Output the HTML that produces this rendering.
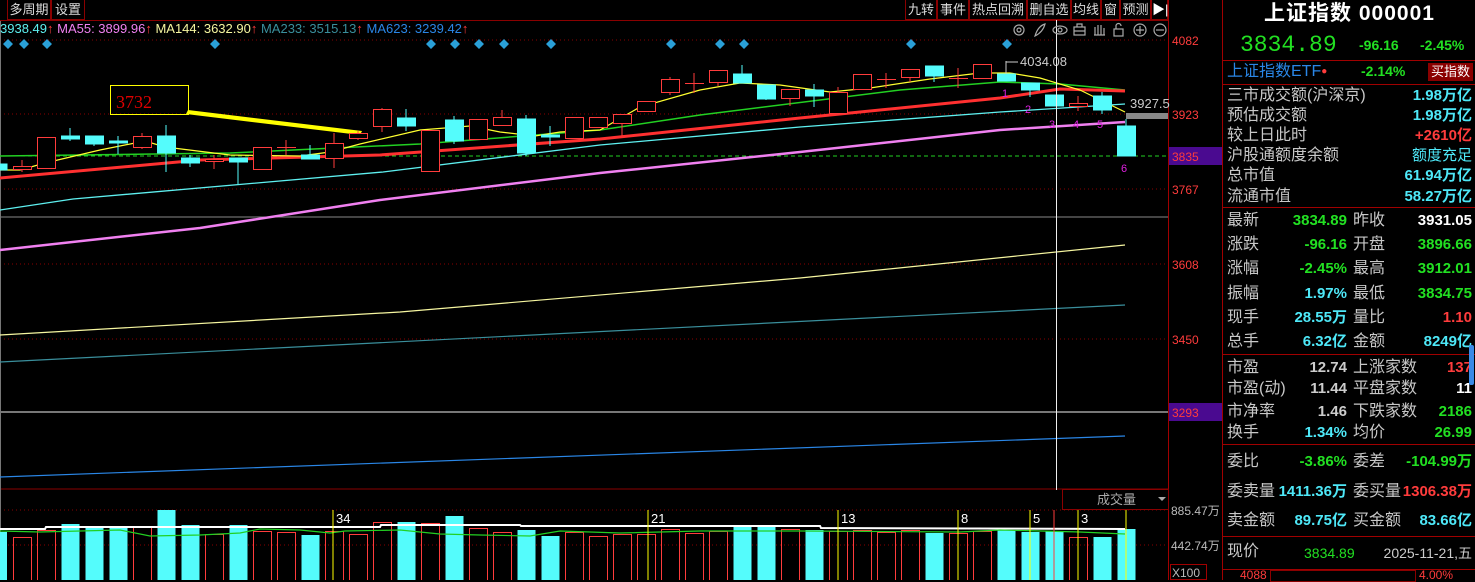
<!DOCTYPE html>
<html><head><meta charset="utf-8"><style>
*{margin:0;padding:0;box-sizing:border-box}
body{width:1475px;height:580px;background:#000;overflow:hidden;position:relative;font-family:"Liberation Sans","Noto Sans CJK SC",sans-serif;color:#c0c0c0}
.a{position:absolute;white-space:nowrap}
.tb{position:absolute;top:0;height:20px;border:1px solid #8a0000;border-top:none;font-size:13px;color:#ddd;line-height:19px;text-align:center}
.rp{position:absolute;left:1222px;top:0;width:253px;height:580px;border-left:1px solid #a00000}
.l{font-size:16px;color:#c8c8c8;line-height:20px}
.v{font-size:15px;font-weight:bold;line-height:20px;text-align:right}
.hl{position:absolute;left:0;width:253px;height:1px;background:#a00000}
.g{color:#22e022}.c{color:#4ee8f8}.r{color:#ff3c3c}.w{color:#fff}
</style></head><body>
<svg class="a" style="left:0;top:0" width="1222" height="580" viewBox="0 0 1222 580">
<g stroke="#8a0000" stroke-dasharray="1,3">
<line x1="0" y1="40" x2="1168" y2="40"/><line x1="0" y1="114" x2="1168" y2="114"/><line x1="0" y1="189" x2="1168" y2="189"/><line x1="0" y1="264" x2="1168" y2="264"/><line x1="0" y1="339" x2="1168" y2="339"/><line x1="0" y1="510" x2="1168" y2="510"/><line x1="0" y1="545" x2="1168" y2="545"/>
</g>
<line x1="0" y1="217" x2="1168" y2="217" stroke="#888"/>
<line x1="0" y1="412" x2="1168" y2="412" stroke="#eee"/>
<line x1="0" y1="489" x2="1168" y2="489" stroke="#8a0000"/>
<line x1="1168.5" y1="0" x2="1168.5" y2="580" stroke="#a00000"/>
<line x1="0.5" y1="20" x2="0.5" y2="580" stroke="#777"/>
<line x1="0" y1="156" x2="1168" y2="156" stroke="#22d022" stroke-dasharray="4,3"/>
<line x1="0" y1="20.5" x2="1168" y2="20.5" stroke="#8a0000"/>
<polyline fill="none" stroke="#f6f6a0" stroke-width="1.2" points="0,335 400,312 800,278 1125,245"/>
<polyline fill="none" stroke="#3a8f9c" stroke-width="1.2" points="0,362 1125,305"/>
<polyline fill="none" stroke="#2a86e6" stroke-width="1.2" points="0,477 1125,436"/>
<polyline fill="none" stroke="#f080f0" stroke-width="2.5" points="0,250 200,228 380,200 600,173 800,152 1000,130 1125,122"/>
<polyline fill="none" stroke="#5ef0f0" stroke-width="1.3" points="0,210 73,199 383,172 600,145 800,127 1000,112 1125,104"/>
<polyline fill="none" stroke="#22d022" stroke-width="1.5" points="0,156 230,153 420,144 600,130 700,115 900,90 1000,82 1060,84 1125,90"/>
<polyline fill="none" stroke="#ff3030" stroke-width="3" points="0,178 200,160 380,155 600,139 800,118 1000,98 1060,89 1125,91"/>
<polyline fill="none" stroke="#ffff30" stroke-width="1.2" points="0,170 20,170 45,163 100,150 145,141 165,147 230,155 300,156 330,152 360,144 420,130 470,126 500,132 535,136 560,132 600,130 640,107 700,90 740,83 780,85 830,92 870,88 930,79 980,73 1010,73 1040,78 1080,90 1125,112"/>
<rect x="110.5" y="85.5" width="78" height="29" fill="none" stroke="#ffff00"/>
<text x="116" y="108" fill="#e00000" font-family="Liberation Serif" font-size="18">3732</text>
<polygon points="188,110 362,131 360,135 186,114" fill="#ffff00"/>
<g stroke="#ff3c3c" fill="#000">
<line x1="22" y1="160" x2="22" y2="172"/><rect x="13.5" y="166.5" width="18" height="3"/>
<line x1="46" y1="137" x2="46" y2="168"/><rect x="37.5" y="137.5" width="18" height="31"/>
<line x1="142" y1="133" x2="142" y2="149"/><rect x="133.5" y="136.5" width="18" height="11"/>
<line x1="214" y1="155" x2="214" y2="169"/><rect x="205.5" y="159.5" width="18" height="2"/>
<line x1="262" y1="147" x2="262" y2="169"/><rect x="253.5" y="147.5" width="18" height="22"/>
<line x1="286" y1="140" x2="286" y2="155"/><line x1="277" y1="147.5" x2="296" y2="147.5"/>
<line x1="334" y1="133" x2="334" y2="168"/><rect x="325.5" y="143.5" width="18" height="15"/>
<line x1="358" y1="131" x2="358" y2="140"/><rect x="349.5" y="133.5" width="18" height="5"/>
<line x1="382" y1="108" x2="382" y2="132"/><rect x="373.5" y="109.5" width="18" height="17"/>
<rect x="421.5" y="130.5" width="18" height="41"/>
<rect x="469.5" y="119.5" width="18" height="20"/>
<line x1="502" y1="110" x2="502" y2="125"/><rect x="493.5" y="117.5" width="18" height="8"/>
<rect x="565.5" y="117.5" width="18" height="21"/>
<rect x="589.5" y="117.5" width="18" height="10"/>
<line x1="622" y1="114" x2="622" y2="136"/><rect x="613.5" y="114.5" width="18" height="9"/>
<rect x="637.5" y="101.5" width="18" height="10"/>
<line x1="670" y1="77" x2="670" y2="95"/><rect x="661.5" y="79.5" width="18" height="13"/>
<line x1="694" y1="73" x2="694" y2="93"/><line x1="685" y1="83.5" x2="704" y2="83.5"/>
<line x1="718" y1="82" x2="718" y2="86"/><rect x="709.5" y="70.5" width="18" height="12"/>
<line x1="790" y1="98" x2="790" y2="106"/><rect x="781.5" y="89.5" width="18" height="9"/>
<line x1="838" y1="87" x2="838" y2="92"/><rect x="829.5" y="92.5" width="18" height="21"/>
<rect x="853.5" y="74.5" width="18" height="15"/>
<line x1="886" y1="73" x2="886" y2="88"/><line x1="877" y1="79.5" x2="896" y2="79.5"/>
<line x1="910" y1="77" x2="910" y2="82"/><rect x="901.5" y="69.5" width="18" height="8"/>
<line x1="958" y1="68" x2="958" y2="88"/><line x1="949" y1="78.5" x2="968" y2="78.5"/>
<rect x="973.5" y="64.5" width="18" height="14"/>
<line x1="1078" y1="96" x2="1078" y2="111"/><rect x="1069.5" y="103.5" width="18" height="3"/>
</g>
<g stroke="#54fcfc" fill="#54fcfc">
<rect x="-5" y="164" width="12" height="6"/>
<line x1="70" y1="128" x2="70" y2="141"/><rect x="61.5" y="136" width="18" height="3"/>
<line x1="94" y1="136" x2="94" y2="146"/><rect x="85.5" y="136" width="18" height="8"/>
<line x1="118" y1="136" x2="118" y2="154"/><rect x="109.5" y="141" width="18" height="2"/>
<line x1="166" y1="125" x2="166" y2="172"/><rect x="157.5" y="136" width="18" height="17"/>
<line x1="190" y1="155" x2="190" y2="167"/><rect x="181.5" y="158" width="18" height="5"/>
<line x1="238" y1="158" x2="238" y2="184"/><rect x="229.5" y="158" width="18" height="4"/>
<line x1="310" y1="145" x2="310" y2="158"/><rect x="301.5" y="155" width="18" height="4"/>
<line x1="406" y1="109" x2="406" y2="131"/><rect x="397.5" y="118" width="18" height="8"/>
<line x1="454" y1="116" x2="454" y2="144"/><rect x="445.5" y="120" width="18" height="21"/>
<line x1="526" y1="115" x2="526" y2="156"/><rect x="517.5" y="119" width="18" height="34"/>
<line x1="550" y1="126" x2="550" y2="146"/><rect x="541.5" y="135" width="18" height="2"/>
<line x1="742" y1="65" x2="742" y2="83"/><rect x="733.5" y="74" width="18" height="9"/>
<line x1="766" y1="85" x2="766" y2="100"/><rect x="757.5" y="85" width="18" height="14"/>
<line x1="814" y1="84" x2="814" y2="107"/><rect x="805.5" y="90" width="18" height="6"/>
<line x1="934" y1="66" x2="934" y2="82"/><rect x="925.5" y="66" width="18" height="10"/>
<line x1="1006" y1="61" x2="1006" y2="81"/><rect x="997.5" y="74" width="18" height="7"/>
<line x1="1030" y1="83" x2="1030" y2="97"/><rect x="1021.5" y="83" width="18" height="7"/>
<rect x="1045.5" y="95" width="18" height="11"/>
<line x1="1102" y1="92" x2="1102" y2="114"/><rect x="1093.5" y="96" width="18" height="14"/>
<line x1="1126" y1="119" x2="1126" y2="126"/><rect x="1117.5" y="126" width="18" height="30"/>
</g>
<rect x="1126" y="113" width="42" height="6" fill="#888"/>
<line x1="1006" y1="61" x2="1006" y2="74" stroke="#ccc"/><line x1="1006" y1="62" x2="1018" y2="62" stroke="#ccc"/>
<text x="1020" y="66" fill="#ccc" font-size="13">4034.08</text>
<text x="1130" y="108" fill="#ccc" font-size="13">3927.5</text>
<g fill="#e020e0" font-size="11"><text x="1002" y="97">1</text><text x="1025" y="113">2</text><text x="1049" y="128">3</text><text x="1073" y="128">4</text><text x="1097" y="128">5</text><text x="1121" y="172">6</text></g>
<line x1="1056.5" y1="20" x2="1056.5" y2="490" stroke="#eee"/>
<g fill="#2aa0d8">
<path d="M8,39l5,5-5,5-5-5z M24,39l5,5-5,5-5-5z M47,39l5,5-5,5-5-5z M215,39l5,5-5,5-5-5z M431,39l5,5-5,5-5-5z M455,39l5,5-5,5-5-5z M479,39l5,5-5,5-5-5z M504,39l5,5-5,5-5-5z M551,39l5,5-5,5-5-5z M671,39l5,5-5,5-5-5z M720,39l5,5-5,5-5-5z M744,39l5,5-5,5-5-5z M911,39l5,5-5,5-5-5z M1007,39l5,5-5,5-5-5z"/>
</g>
<g fill="none" stroke="#aaa" stroke-width="1.2">
<circle cx="1019" cy="30" r="5"/><circle cx="1019" cy="30" r="2"/>
<path d="M1035,36 Q1038,26 1045,24 Q1043,32 1035,36z"/>
<ellipse cx="1060" cy="30" rx="7" ry="4"/><circle cx="1060" cy="30" r="2"/>
<rect x="1074" y="27" width="11" height="8"/><path d="M1077,27v-3h5v3M1074,31h11"/>
<path d="M1095,35v-8M1098,35v-10M1101,35v-10M1104,35v-7M1094,35h11"/>
<rect x="1114" y="29" width="9" height="7"/><path d="M1116,29v-3a2.5,2.5 0 0 1 5,0"/>
<circle cx="1140" cy="30" r="6"/><path d="M1136,30h8M1140,26v8"/>
<circle cx="1160" cy="30" r="6"/><path d="M1156,30h8"/>
</g>
<g fill="#54fcfc">
<rect x="-5" y="532" width="12" height="48"/><rect x="61.5" y="524" width="18" height="56"/><rect x="85.5" y="527" width="18" height="53"/><rect x="109.5" y="527" width="18" height="53"/><rect x="157.5" y="510" width="18" height="70"/><rect x="181.5" y="525" width="18" height="55"/><rect x="229.5" y="525" width="18" height="55"/><rect x="301.5" y="535" width="18" height="45"/><rect x="397.5" y="522" width="18" height="58"/><rect x="445.5" y="516" width="18" height="64"/><rect x="517.5" y="530" width="18" height="50"/><rect x="541.5" y="536" width="18" height="44"/><rect x="733.5" y="526" width="18" height="54"/><rect x="757.5" y="526" width="18" height="54"/><rect x="805.5" y="530" width="18" height="50"/><rect x="925.5" y="533" width="18" height="47"/><rect x="997.5" y="530" width="18" height="50"/><rect x="1021.5" y="532" width="18" height="48"/><rect x="1045.5" y="531" width="18" height="49"/><rect x="1093.5" y="537" width="18" height="43"/><rect x="1117.5" y="529" width="18" height="51"/>
</g>
<g fill="none" stroke="#ff3c3c">
<rect x="13.5" y="537.5" width="18" height="43"/><rect x="37.5" y="530.5" width="18" height="50"/><rect x="133.5" y="527.5" width="18" height="53"/><rect x="205.5" y="534.5" width="18" height="46"/><rect x="253.5" y="531.5" width="18" height="49"/><rect x="277.5" y="532.5" width="18" height="48"/><rect x="325.5" y="531.5" width="18" height="49"/><rect x="349.5" y="534.5" width="18" height="46"/><rect x="373.5" y="522.5" width="18" height="58"/><rect x="421.5" y="523.5" width="18" height="57"/><rect x="469.5" y="528.5" width="18" height="52"/><rect x="493.5" y="532.5" width="18" height="48"/><rect x="565.5" y="532.5" width="18" height="48"/><rect x="589.5" y="536.5" width="18" height="44"/><rect x="613.5" y="534.5" width="18" height="46"/><rect x="637.5" y="534.5" width="18" height="46"/><rect x="661.5" y="529.5" width="18" height="51"/><rect x="685.5" y="533.5" width="18" height="47"/><rect x="709.5" y="531.5" width="18" height="49"/><rect x="781.5" y="529.5" width="18" height="51"/><rect x="829.5" y="531.5" width="18" height="49"/><rect x="853.5" y="530.5" width="18" height="50"/><rect x="877.5" y="532.5" width="18" height="48"/><rect x="901.5" y="530.5" width="18" height="50"/><rect x="949.5" y="533.5" width="18" height="47"/><rect x="973.5" y="531.5" width="18" height="49"/><rect x="1069.5" y="537.5" width="18" height="43"/>
</g>
<polyline fill="none" stroke="#fff" stroke-width="2" points="0,529 45,529 46,527 380,527 381,525 520,525 521,526 820,526 821,528 1125,529"/>
<polyline fill="none" stroke="#22d022" stroke-width="1.2" points="0,531 40,532 120,530 150,536 200,535 240,533 260,529 300,530 330,533 345,531 400,530 440,534 480,535 530,536 560,531 620,533 700,531 800,531 960,532 1000,530 1080,532 1125,534"/>
<g stroke="#ffff00"><line x1="333" y1="510" x2="333" y2="580"/><line x1="648" y1="510" x2="648" y2="580"/><line x1="838" y1="510" x2="838" y2="580"/><line x1="958" y1="510" x2="958" y2="580"/><line x1="1030" y1="510" x2="1030" y2="580"/><line x1="1078" y1="510" x2="1078" y2="580"/><line x1="1126" y1="510" x2="1126" y2="580"/></g>
<line x1="1054" y1="510" x2="1054" y2="580" stroke="#ff3c3c"/>
<g fill="#fff" font-size="13"><text x="336" y="523">34</text><text x="651" y="523">21</text><text x="841" y="523">13</text><text x="961" y="523">8</text><text x="1033" y="523">5</text><text x="1081" y="523">3</text></g>
<rect x="1062.5" y="489.5" width="106" height="20" fill="#000" stroke="#8a0000"/>
<text x="1097" y="504" fill="#aaa" font-size="13">成交量</text><path d="M1158,497h8l-4,4z" fill="#aaa"/>
<rect x="1169" y="147" width="53" height="18" fill="#4a0a90"/>
<rect x="1169" y="403" width="53" height="18" fill="#4a0a90"/>
<g fill="#ff3c3c" font-size="12"><text x="1172" y="45">4082</text><text x="1172" y="119">3923</text><text x="1172" y="161">3835</text><text x="1172" y="194">3767</text><text x="1172" y="269">3608</text><text x="1172" y="344">3450</text><text x="1172" y="417">3293</text></g>
<g fill="#bbb" font-size="12"><text x="1171" y="515">885.47万</text><text x="1171" y="550">442.74万</text><text x="1172" y="577">X100</text></g>
<rect x="1170.5" y="564.5" width="36" height="15" fill="none" stroke="#a00000"/>
</svg>
<div class="a" style="left:0;top:21px;font-size:13px;line-height:16px"><span style="color:#5ef0f0">3938.49</span><span class="r">↑</span> <span style="color:#f080f0">MA55: 3899.96</span><span class="r">↑</span> <span style="color:#f6f6a0">MA144: 3632.90</span><span class="r">↑</span> <span style="color:#3a8f9c">MA233: 3515.13</span><span class="r">↑</span> <span style="color:#2a86e6">MA623: 3239.42</span><span class="r">↑</span></div>
<div class="tb" style="left:7px;width:44px">多周期</div><div class="tb" style="left:51px;width:34px">设置</div>
<div class="tb" style="left:905px;width:32px">九转</div><div class="tb" style="left:937px;width:32px">事件</div><div class="tb" style="left:969px;width:58px">热点回溯</div><div class="tb" style="left:1027px;width:44px">删自选</div><div class="tb" style="left:1071px;width:30px">均线</div><div class="tb" style="left:1101px;width:19px">窗</div><div class="tb" style="left:1120px;width:31px">预测</div><div class="tb" style="left:1151px;width:17px;color:#fff">▶|</div>
<div class="rp">
<div class="a w" style="left:0;width:253px;top:1px;text-align:center;font-size:21px;font-weight:bold;line-height:26px;letter-spacing:1px">上证指数 000001</div>
<div class="a g" style="left:17px;top:31px;font-size:23px;line-height:28px;font-family:'Liberation Mono',monospace">3834.89</div>
<div class="a g" style="left:136px;top:37px;font-size:14px;font-weight:bold">-96.16</div>
<div class="a g" style="left:197px;top:37px;font-size:14px;font-weight:bold">-2.45%</div>
<div class="hl" style="top:60px"></div>
<div class="a" style="left:4px;top:62px;font-size:16px;color:#2a86e6;line-height:20px">上证指数ETF<span class="r" style="font-size:10px;vertical-align:top">●</span></div>
<div class="a g" style="left:138px;top:63px;font-size:14px;font-weight:bold">-2.14%</div>
<div class="a w" style="left:205px;top:63px;width:45px;height:18px;background:#8a0000;font-size:13px;text-align:center;line-height:18px">买指数</div>
<div class="hl" style="top:84px"></div>
<div class="a l" style="left:4px;top:86px">三市成交额(沪深京)</div><div class="a v c" style="right:3px;top:86px">1.98万亿</div>
<div class="a l" style="left:4px;top:106px">预估成交额</div><div class="a v c" style="right:3px;top:106px">1.98万亿</div>
<div class="a l" style="left:4px;top:126px">较上日此时</div><div class="a v r" style="right:3px;top:126px">+2610亿</div>
<div class="a l" style="left:4px;top:146px">沪股通额度余额</div><div class="a c" style="right:3px;top:146px;font-size:15px;line-height:20px">额度充足</div>
<div class="a l" style="left:4px;top:166px">总市值</div><div class="a v c" style="right:3px;top:166px">61.94万亿</div>
<div class="a l" style="left:4px;top:187px">流通市值</div><div class="a v c" style="right:3px;top:187px">58.27万亿</div>
<div class="hl" style="top:207px"></div>
<div class="a l" style="left:4px;top:211px">最新</div><div class="a v g" style="right:128px;top:211px">3834.89</div><div class="a l" style="left:130px;top:211px">昨收</div><div class="a v w" style="right:3px;top:211px">3931.05</div>
<div class="a l" style="left:4px;top:235px">涨跌</div><div class="a v g" style="right:128px;top:235px">-96.16</div><div class="a l" style="left:130px;top:235px">开盘</div><div class="a v g" style="right:3px;top:235px">3896.66</div>
<div class="a l" style="left:4px;top:259px">涨幅</div><div class="a v g" style="right:128px;top:259px">-2.45%</div><div class="a l" style="left:130px;top:259px">最高</div><div class="a v g" style="right:3px;top:259px">3912.01</div>
<div class="a l" style="left:4px;top:284px">振幅</div><div class="a v c" style="right:128px;top:284px">1.97%</div><div class="a l" style="left:130px;top:284px">最低</div><div class="a v g" style="right:3px;top:284px">3834.75</div>
<div class="a l" style="left:4px;top:308px">现手</div><div class="a v c" style="right:128px;top:308px">28.55万</div><div class="a l" style="left:130px;top:308px">量比</div><div class="a v r" style="right:3px;top:308px">1.10</div>
<div class="a l" style="left:4px;top:332px">总手</div><div class="a v c" style="right:128px;top:332px">6.32亿</div><div class="a l" style="left:130px;top:332px">金额</div><div class="a v c" style="right:3px;top:332px">8249亿</div>
<div class="hl" style="top:354px"></div>
<div class="a l" style="left:4px;top:358px">市盈</div><div class="a v" style="right:128px;top:358px;color:#ccc">12.74</div><div class="a l" style="left:130px;top:358px">上涨家数</div><div class="a v r" style="right:3px;top:358px">137</div>
<div class="a l" style="left:4px;top:379px">市盈(动)</div><div class="a v" style="right:128px;top:379px;color:#ccc">11.44</div><div class="a l" style="left:130px;top:379px">平盘家数</div><div class="a v w" style="right:3px;top:379px">11</div>
<div class="a l" style="left:4px;top:402px">市净率</div><div class="a v" style="right:128px;top:402px;color:#ccc">1.46</div><div class="a l" style="left:130px;top:402px">下跌家数</div><div class="a v g" style="right:3px;top:402px">2186</div>
<div class="a l" style="left:4px;top:423px">换手</div><div class="a v c" style="right:128px;top:423px">1.34%</div><div class="a l" style="left:130px;top:423px">均价</div><div class="a v g" style="right:3px;top:423px">26.99</div>
<div class="a" style="left:246px;top:345px;width:5px;height:40px;background:#3a8ae6;border-radius:2px"></div>
<div class="hl" style="top:444px"></div>
<div class="a l" style="left:4px;top:452px">委比</div><div class="a v g" style="right:128px;top:452px">-3.86%</div><div class="a l" style="left:130px;top:452px">委差</div><div class="a v g" style="right:3px;top:452px">-104.99万</div>
<div class="a l" style="left:4px;top:482px">委卖量</div><div class="a v c" style="right:128px;top:482px">1411.36万</div><div class="a l" style="left:130px;top:482px">委买量</div><div class="a v r" style="right:3px;top:482px">1306.38万</div>
<div class="a l" style="left:4px;top:511px">卖金额</div><div class="a v c" style="right:128px;top:511px">89.75亿</div><div class="a l" style="left:130px;top:511px">买金额</div><div class="a v c" style="right:3px;top:511px">83.66亿</div>
<div class="hl" style="top:536px"></div>
<div class="a l" style="left:4px;top:542px">现价</div><div class="a g" style="left:81px;top:543px;font-size:14px;line-height:20px">3834.89</div><div class="a" style="right:3px;top:543px;font-size:14px;line-height:20px;color:#ccc">2025-11-21,五</div>
<div class="hl" style="top:569px"></div>
<div class="a r" style="left:17px;top:568px;font-size:12px">4088</div><div class="a r" style="left:196px;top:568px;font-size:12px">4.00%</div>
<div class="a" style="left:47px;top:570px;width:146px;height:12px;border:1px solid #8a0000"></div>
</div>
</body></html>
